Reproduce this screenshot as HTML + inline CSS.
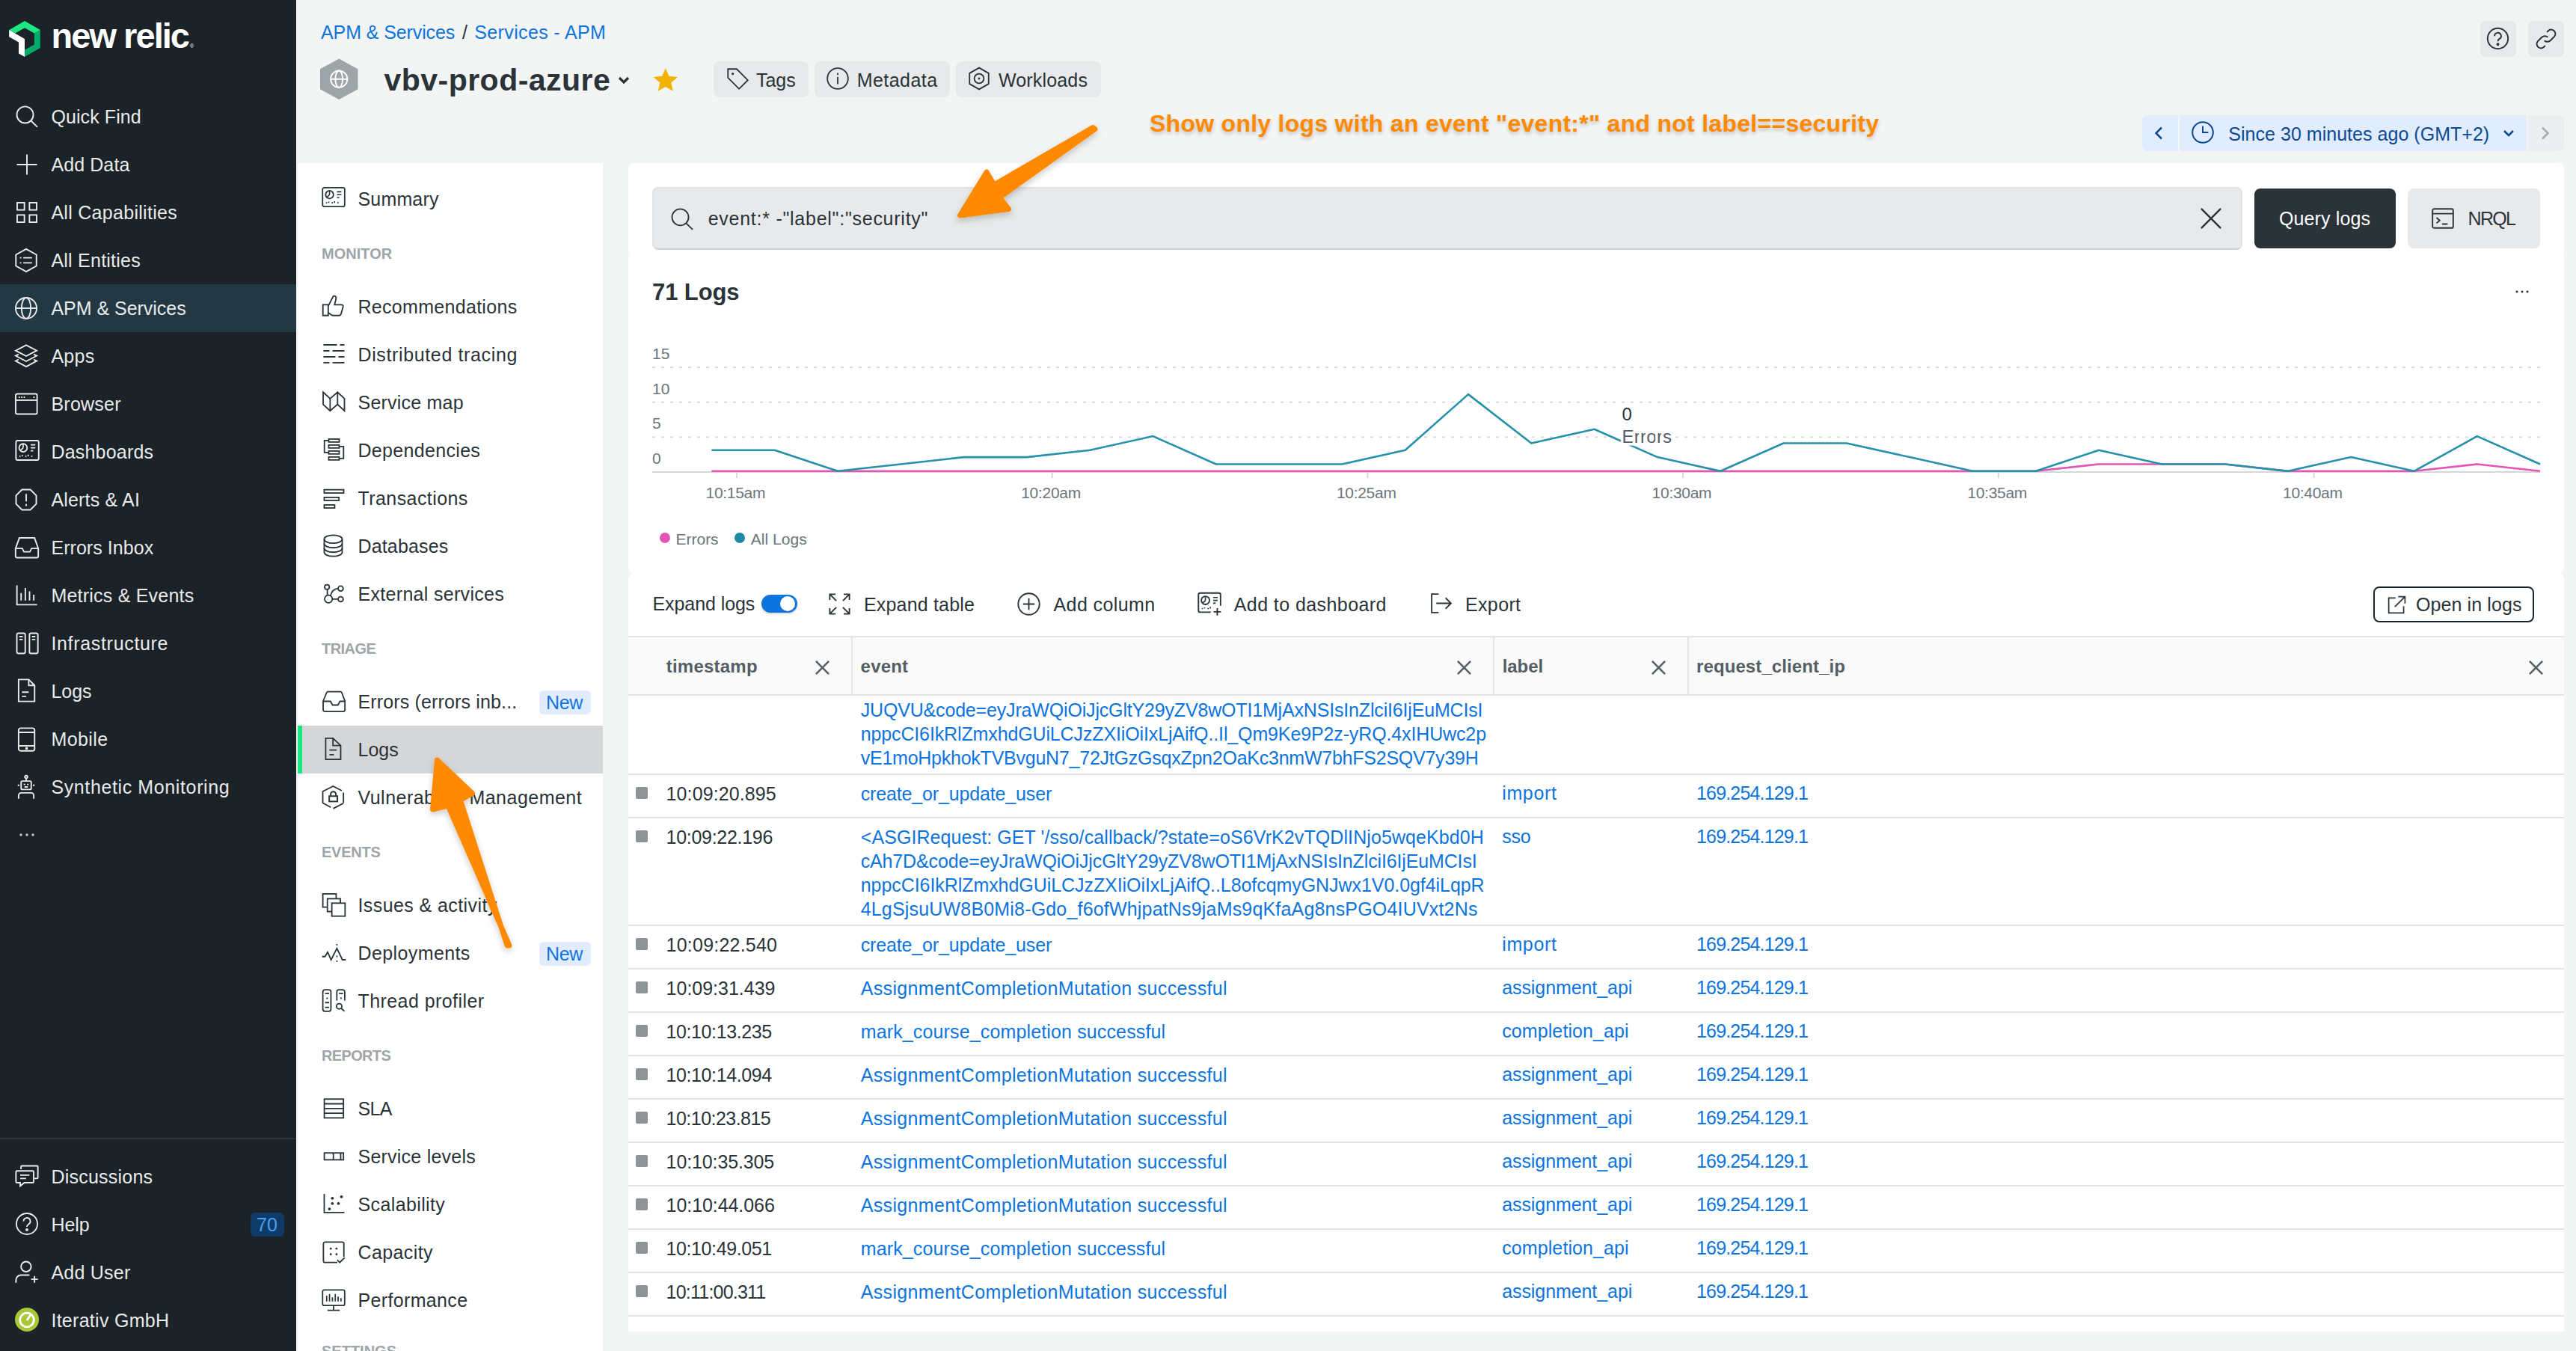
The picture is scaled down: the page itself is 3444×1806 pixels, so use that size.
<!DOCTYPE html>
<html lang="en"><head><meta charset="utf-8"><title>vbv-prod-azure - Logs - New Relic</title>
<style>
*{box-sizing:border-box;margin:0;padding:0}
html,body{width:3444px;height:1806px;overflow:hidden;background:#f3f4f4}
body{font-family:"Liberation Sans",sans-serif;font-size:25px;line-height:32px;color:#293338;position:relative}
.t{position:absolute;white-space:nowrap}
.ic{position:absolute;display:block;overflow:visible}
.abs{position:absolute}
#side{position:absolute;left:0;top:0;width:396px;height:1806px;background:#1b2228;color:#e9ebeb}
#side .act{position:absolute;left:0;top:380px;width:396px;height:64px;background:#223843}
#side .div{position:absolute;left:0;top:1521px;width:396px;height:2px;background:#2a353c}
#sub{position:absolute;left:398px;top:218px;width:408px;height:1588px;background:#fff;color:#293338;overflow:hidden}
#sub .sec{color:#9ea5a9;font-weight:bold}
#sub .cur{position:absolute;left:0;top:752px;width:408px;height:64px;background:#d5d6d7}
#sub .cur i{position:absolute;left:0;top:0;width:6px;height:64px;background:#1ce783}
.badge{position:absolute;height:32px;border-radius:6px;background:#e1edff;color:#0c74df}
.card{position:absolute;left:840px;width:2588px;background:#fff;border-radius:8px}
.btn{position:absolute;border-radius:8px;background:#e8e9ea}
a{color:#0c74df;text-decoration:none}
.lnk{color:#0c74df}
.row{position:absolute;left:840px;width:2588px;border-bottom:2px solid #e3e4e4}
.sq{position:absolute;left:850px;width:16px;height:16px;background:#8e9496;border-radius:2px}
.sh{text-shadow:0 3px 5px rgba(0,0,0,.22)}
</style></head>
<body>
<nav id="side">
<div class="act"></div><div class="div"></div>
<svg class="ic" style="left:12px;top:28px" width="42" height="48" viewBox="0 0 832.8 959.8"><path fill="#00ac69" d="M672.6 332.3l160.2-92.400v480L416.4 959.8V775.2l256.2-147.600z"/><path fill="#1ce783" d="M416.4 184.6L160.2 332.3 0 239.9 416.400 0l416.400 239.900-160.200 92.400z"/><path fill="#fff" d="M256.2 572.3L0 424.6V239.900l416.400 240v479.900l-160.200-92.200z"/></svg>
<span class="t" style="left:68.5px;top:24.3px;font-size:47px;line-height:48px;letter-spacing:-1.96px;font-weight:bold;color:#fff;">new relic</span><span class="t" style="left:254.0px;top:58.0px;font-size:7px;line-height:8px;color:#fff;">®</span><svg class="ic" width="36" height="36" viewBox="0 0 32 32" fill="none" stroke="currentColor" stroke-width="1.7" style="left:17.8px;top:138.0px;"><circle cx="13.800" cy="13.700" r="9.800"/><path d="M20.700 20.700l7.800 7.600"/></svg><span class="t" style="left:68.4px;top:139.5px;letter-spacing:0.10px;">Quick Find</span>
<svg class="ic" width="36" height="36" viewBox="0 0 32 32" fill="none" stroke="currentColor" stroke-width="1.7" style="left:18.0px;top:202.0px;"><path d="M16 4v24M4 16h24"/></svg><span class="t" style="left:68.4px;top:203.5px;letter-spacing:0.10px;">Add Data</span>
<svg class="ic" width="36" height="36" viewBox="0 0 32 32" fill="none" stroke="currentColor" stroke-width="1.7" style="left:18.0px;top:266.0px;"><rect x="4.400" y="4.400" width="8.600" height="8.600"/><rect x="19" y="4.400" width="8.600" height="8.600"/><rect x="4.400" y="19" width="8.600" height="8.600"/><rect x="19" y="19" width="8.600" height="8.600"/></svg><span class="t" style="left:68.4px;top:267.5px;letter-spacing:0.29px;">All Capabilities</span>
<svg class="ic" width="36" height="36" viewBox="0 0 32 32" fill="none" stroke="currentColor" stroke-width="1.7" style="left:17.2px;top:330.0px;"><path d="M16 2.500l12.200 6.800v13.400L16 29.500 3.800 22.700V9.300z"/><path d="M12.500 13h10.500M12.500 19h10.500M8.500 13h1.800M8.500 19h1.800"/></svg><span class="t" style="left:68.4px;top:331.5px;letter-spacing:0.24px;">All Entities</span>
<svg class="ic" width="36" height="36" viewBox="0 0 32 32" fill="none" stroke="currentColor" stroke-width="1.7" style="left:17.2px;top:394.0px;"><circle cx="16" cy="16" r="12.500"/><ellipse cx="16" cy="16" rx="5.500" ry="12.500"/><path d="M3.500 16h25"/></svg><span class="t" style="left:68.4px;top:395.5px;letter-spacing:-0.02px;">APM &amp; Services</span>
<svg class="ic" width="36" height="36" viewBox="0 0 32 32" fill="none" stroke="currentColor" stroke-width="1.7" style="left:17.2px;top:458.0px;"><path d="M16 3l12.500 6.500L16 16 3.500 9.500z"/><path d="M7 13.800l-3.500 1.800L16 22.200l12.500-6.600-3.500-1.800M7 20l-3.500 1.800L16 28.500l12.500-6.700L25 20"/></svg><span class="t" style="left:68.4px;top:459.5px;letter-spacing:0.29px;">Apps</span>
<svg class="ic" width="36" height="36" viewBox="0 0 32 32" fill="none" stroke="currentColor" stroke-width="1.7" style="left:16.9px;top:522.0px;"><rect x="3.500" y="4" width="25.500" height="24" rx="2"/><path d="M3.500 11.500h25.500"/><path d="M7 8h1.500M10 8h1.500M13 8h1.500M24.500 8h1.500" stroke-width="1.600"/></svg><span class="t" style="left:68.4px;top:523.5px;letter-spacing:0.25px;">Browser</span>
<svg class="ic" width="36" height="36" viewBox="0 0 32 32" fill="none" stroke="currentColor" stroke-width="1.7" style="left:17.5px;top:584.0px;"><rect x="3" y="4.500" width="27" height="23" rx="2"/><circle cx="11.500" cy="13" r="4.800"/><path d="M11.500 13v-4.800M11.500 13l-3.400 3.400M20.500 9.500h5.500M20.500 13h5.500M20.500 16.500h3M7 23h1.500M10.500 23v-1.500M14 23h1.500M17.500 23v-2M21 23h1.500" stroke-width="1.500"/></svg><span class="t" style="left:68.4px;top:587.5px;letter-spacing:0.21px;">Dashboards</span>
<svg class="ic" width="36" height="36" viewBox="0 0 32 32" fill="none" stroke="currentColor" stroke-width="1.7" style="left:17.2px;top:650.0px;"><path d="M11 4h10l7 7v10l-7 7H11l-7-7V11z"/><path d="M16 9v9M16 21v2.500"/></svg><span class="t" style="left:68.4px;top:651.5px;letter-spacing:0.18px;">Alerts &amp; AI</span>
<svg class="ic" width="36" height="36" viewBox="0 0 32 32" fill="none" stroke="currentColor" stroke-width="1.7" style="left:18.0px;top:714.0px;"><path d="M2.500 17L7 4.500h18L29.500 17v9a2 2 0 0 1-2 2h-23a2 2 0 0 1-2-2z"/><path d="M2.500 17h8l2 4h7l2-4h8"/></svg><span class="t" style="left:68.4px;top:715.5px;letter-spacing:0.06px;">Errors Inbox</span>
<svg class="ic" width="36" height="36" viewBox="0 0 32 32" fill="none" stroke="currentColor" stroke-width="1.7" style="left:16.9px;top:778.0px;"><path d="M5 4v23h24"/><path d="M10 22v-9M15 22V7M20 22V11M25 22v-7"/></svg><span class="t" style="left:68.4px;top:779.5px;letter-spacing:0.22px;">Metrics &amp; Events</span>
<svg class="ic" width="36" height="36" viewBox="0 0 32 32" fill="none" stroke="currentColor" stroke-width="1.7" style="left:17.5px;top:842.0px;"><rect x="4" y="4" width="10" height="24" rx="2"/><rect x="19" y="4" width="10" height="24" rx="2"/><path d="M7 8h4M7 11.500h4M22 8h4M22 11.500h4" stroke-width="1.600"/></svg><span class="t" style="left:68.4px;top:843.5px;letter-spacing:0.68px;">Infrastructure</span>
<svg class="ic" width="36" height="36" viewBox="0 0 32 32" fill="none" stroke="currentColor" stroke-width="1.7" style="left:16.5px;top:905.0px;"><path d="M7 3h12l7 7v19H7z"/><path d="M19 3v7h7M11 18h8M11 23h5"/></svg><span class="t" style="left:68.4px;top:907.5px;letter-spacing:-0.00px;">Logs</span>
<svg class="ic" width="36" height="36" viewBox="0 0 32 32" fill="none" stroke="currentColor" stroke-width="1.7" style="left:16.5px;top:970.0px;"><rect x="7" y="3" width="19" height="27" rx="2.500"/><path d="M7 8h19M7 24h19"/><circle cx="16.500" cy="27" r="0.800" fill="currentColor"/></svg><span class="t" style="left:68.4px;top:971.5px;letter-spacing:0.43px;">Mobile</span>
<svg class="ic" width="36" height="36" viewBox="0 0 32 32" fill="none" stroke="currentColor" stroke-width="1.7" style="left:17.0px;top:1034.0px;"><circle cx="16" cy="4" r="1.600"/><path d="M16 6v3"/><rect x="10" y="9" width="12" height="10" rx="1.500"/><path d="M13 13h2M17 13h2M14 16h4" stroke-width="1.600"/><path d="M7 30v-4a3 3 0 0 1 3-3h12a3 3 0 0 1 3 3v4M8 14H6M26 14h-2"/></svg><span class="t" style="left:68.4px;top:1035.5px;letter-spacing:0.62px;">Synthetic Monitoring</span>
<svg class="ic" width="32" height="32" viewBox="0 0 32 32" fill="none" stroke="currentColor" stroke-width="2" style="left:20.0px;top:1100.0px;color:#c4c8ca;"><circle cx="8" cy="16" r="1.700" fill="currentColor" stroke="none"/><circle cx="16" cy="16" r="1.700" fill="currentColor" stroke="none"/><circle cx="24" cy="16" r="1.700" fill="currentColor" stroke="none"/></svg><svg class="ic" width="36" height="36" viewBox="0 0 32 32" fill="none" stroke="currentColor" stroke-width="1.7" style="left:18.0px;top:1554.0px;"><path d="M9 8V5a1 1 0 0 1 1-1h18a1 1 0 0 1 1 1v13a1 1 0 0 1-1 1h-3"/><path d="M4 10h19a1 1 0 0 1 1 1v12a1 1 0 0 1-1 1H13l-5 4v-4H4a1 1 0 0 1-1-1V11a1 1 0 0 1 1-1z"/><path d="M8 15h11M8 19h7" stroke-width="1.600"/></svg><span class="t" style="left:68.4px;top:1556.5px;letter-spacing:0.23px;">Discussions</span>
<svg class="ic" width="36" height="36" viewBox="0 0 32 32" fill="none" stroke="currentColor" stroke-width="1.7" style="left:18.0px;top:1618.0px;"><circle cx="16" cy="16" r="12.500"/><path d="M12 13a4 4 0 1 1 6 3.400c-1.300.8-2 1.600-2 3.100"/><circle cx="16" cy="23" r="0.900" fill="currentColor"/></svg><span class="t" style="left:68.4px;top:1620.5px;letter-spacing:-0.06px;">Help</span>
<svg class="ic" width="36" height="36" viewBox="0 0 32 32" fill="none" stroke="currentColor" stroke-width="1.7" style="left:18.0px;top:1682.0px;"><circle cx="15" cy="10" r="6"/><path d="M3 29v-3a6 6 0 0 1 6-6h10"/><path d="M25 21v8M21 25h8"/></svg><span class="t" style="left:68.4px;top:1684.5px;letter-spacing:0.24px;">Add User</span>
<div class="abs" style="left:20px;top:1748px;width:32px;height:32px;border-radius:50%;background:#a9c838"></div><svg class="ic" style="left:20px;top:1748px" width="32" height="32" viewBox="0 0 32 32" fill="none" stroke="#fff" stroke-width="2.800"><circle cx="16" cy="16.500" r="9.300"/><path d="M16 17l5.500-8.500"/></svg><span class="t" style="left:68.4px;top:1748.5px;letter-spacing:0.29px;">Iterativ GmbH</span><div class="abs" style="left:335px;top:1621px;width:45px;height:32px;border-radius:6px;background:#0f3b69"></div><span class="t" style="left:343.0px;top:1621.0px;letter-spacing:0.13px;color:#4a9ff5;">70</span></nav>
<nav id="sub">
<div class="cur"><i></i></div>
<svg class="ic" width="35" height="35" viewBox="0 0 32 32" fill="none" stroke="currentColor" stroke-width="1.65" style="left:29.5px;top:28.4px;"><rect x="3" y="4.500" width="27" height="23" rx="2"/><circle cx="11.500" cy="13" r="4.800"/><path d="M11.500 13v-4.800M11.500 13l-3.400 3.400M20.500 9.500h5.500M20.500 13h5.500M20.500 16.500h3M7 23h1.500M10.500 23v-1.500M14 23h1.500M17.500 23v-2M21 23h1.500" stroke-width="1.500"/></svg><span class="t" style="left:80.5px;top:32.2px;letter-spacing:0.16px;">Summary</span>
<span class="t sec" style="left:32.0px;top:109.0px;font-size:20px;line-height:24px;letter-spacing:0.02px;">MONITOR</span>
<svg class="ic" width="35" height="35" viewBox="0 0 32 32" fill="none" stroke="currentColor" stroke-width="1.65" style="left:29.5px;top:173.0px;"><path d="M3.400 14.900h6.500v13.200H3.400z"/><path d="M9.900 16.500l5.700-11c.4-1.500 1.900-1.600 3-.900 1.400 1 1 2.900.6 4.400l-1.600 5.900H26c1.600 0 2.400 1.300 2 2.700L25.600 26c-.4 1.400-1.200 2.100-2.600 2.100h-7.500c-1.500 0-3-1.600-5.600-3.600"/></svg><span class="t" style="left:80.5px;top:176.2px;letter-spacing:0.30px;">Recommendations</span>
<svg class="ic" width="35" height="35" viewBox="0 0 32 32" fill="none" stroke="currentColor" stroke-width="1.65" style="left:29.5px;top:237.0px;"><path d="M4.100 5.500h16.400M24.300 5.500h5.400M4.100 12.800h7.300M15.100 12.800h14.600M4.100 20.100h14.600M22.400 20.100h7.300M4.100 27.400h7.300M15.100 27.400h14.600"/></svg><span class="t" style="left:80.5px;top:240.2px;letter-spacing:0.63px;">Distributed tracing</span>
<svg class="ic" width="35" height="35" viewBox="0 0 32 32" fill="none" stroke="currentColor" stroke-width="1.65" style="left:29.5px;top:301.0px;"><path d="M3.700 4.800l8.500 7.900 9.100-7.900 8.400 7.900v14.900l-8.400-7.900-9.100 7.900-8.500-7.900z"/><path d="M12.200 12.700v14.900M21.300 4.800v14.900"/></svg><span class="t" style="left:80.5px;top:304.2px;letter-spacing:0.22px;">Service map</span>
<svg class="ic" width="35" height="35" viewBox="0 0 32 32" fill="none" stroke="currentColor" stroke-width="1.65" style="left:29.5px;top:365.0px;"><rect x="10.500" y="3.600" width="12.800" height="3.600"/><rect x="10.500" y="10.900" width="12.800" height="3.600"/><rect x="10.500" y="18.200" width="12.800" height="3.600"/><rect x="10.500" y="25.500" width="12.800" height="3.600"/><path d="M10.500 5.400H5.200V20h5.300M23.300 12.700h5.300v14.600h-5.300"/></svg><span class="t" style="left:80.5px;top:368.2px;letter-spacing:0.32px;">Dependencies</span>
<svg class="ic" width="35" height="35" viewBox="0 0 32 32" fill="none" stroke="currentColor" stroke-width="1.65" style="left:29.5px;top:429.0px;"><rect x="5" y="7" width="23.800" height="4"/><rect x="5" y="16.400" width="18" height="3.700"/><rect x="5" y="25.600" width="12.800" height="3.700"/></svg><span class="t" style="left:80.5px;top:432.2px;letter-spacing:0.42px;">Transactions</span>
<svg class="ic" width="35" height="35" viewBox="0 0 32 32" fill="none" stroke="currentColor" stroke-width="1.65" style="left:29.5px;top:493.5px;"><ellipse cx="16" cy="8" rx="11" ry="5"/><path d="M5 8v16c0 2.800 4.900 5 11 5s11-2.200 11-5V8"/><path d="M5 13.500c0 2.800 4.900 5 11 5s11-2.200 11-5M5 19c0 2.800 4.900 5 11 5s11-2.200 11-5"/></svg><span class="t" style="left:80.5px;top:496.2px;letter-spacing:0.15px;">Databases</span>
<svg class="ic" width="35" height="35" viewBox="0 0 32 32" fill="none" stroke="currentColor" stroke-width="1.65" style="left:29.5px;top:557.0px;"><circle cx="8.400" cy="8.900" r="2.900"/><circle cx="10.200" cy="23.500" r="4.700"/><circle cx="25.100" cy="10.700" r="3.100"/><circle cx="25.100" cy="23.800" r="3.100"/><path d="M8.800 11.800V19M12.700 19.500c1.500-5.500 5.300-8.500 9.300-8.800M14.900 23.700H22"/></svg><span class="t" style="left:80.5px;top:560.2px;letter-spacing:0.31px;">External services</span>
<span class="t sec" style="left:32.0px;top:637.0px;font-size:20px;line-height:24px;letter-spacing:-0.54px;">TRIAGE</span>
<svg class="ic" width="35" height="35" viewBox="0 0 32 32" fill="none" stroke="currentColor" stroke-width="1.65" style="left:29.5px;top:701.0px;"><path d="M3.700 16.700L8 6.200c.3-.700.700-1 1.500-1h15.400c.8 0 1.200.3 1.500 1l3.900 10.500v10.600a2 2 0 0 1-2 2H5.700a2 2 0 0 1-2-2z"/><path d="M3.700 16.900h8.900l2.700 4.600h6.300l2.700-4.600h6"/></svg><span class="t" style="left:80.5px;top:704.2px;letter-spacing:0.15px;">Errors (errors inb...</span>
<svg class="ic" width="35" height="35" viewBox="0 0 32 32" fill="none" stroke="currentColor" stroke-width="1.65" style="left:29.5px;top:765.0px;"><path d="M6.800 3.600h8.900l9.400 8.900v16.800H6.800z"/><path d="M15.700 3.600v8.900h9.400M11.400 18h8.800M11.400 23.700h5.500"/></svg><span class="t" style="left:80.5px;top:768.2px;letter-spacing:-0.00px;">Logs</span>
<svg class="ic" width="35" height="35" viewBox="0 0 32 32" fill="none" stroke="currentColor" stroke-width="1.65" style="left:29.5px;top:829.0px;"><path d="M28.500 11.500V24M26.500 9.200L15.900 3.700 3.200 10v14l9.800 5.500M16 31l12.500-6.500"/><rect x="11.100" y="15.800" width="10" height="6.500" stroke-width="1.800"/><path d="M12.900 15.800v-2.300a3.200 3.200 0 0 1 6.400 0v2.300" stroke-width="1.800"/></svg><span class="t" style="left:80.5px;top:832.2px;letter-spacing:0.48px;">Vulnerability Management</span>
<span class="t sec" style="left:32.0px;top:909.0px;font-size:20px;line-height:24px;letter-spacing:-0.26px;">EVENTS</span>
<svg class="ic" width="35" height="35" viewBox="0 0 32 32" fill="none" stroke="currentColor" stroke-width="1.65" style="left:29.5px;top:973.0px;"><rect x="3.300" y="3.600" width="16.300" height="16.200" fill="#fff"/><rect x="8.900" y="9.500" width="15.800" height="15.700" fill="#fff"/><rect x="14.300" y="14.900" width="16.200" height="15.900" fill="#fff"/></svg><span class="t" style="left:80.5px;top:976.2px;letter-spacing:0.41px;">Issues &amp; activity</span>
<svg class="ic" width="35" height="35" viewBox="0 0 32 32" fill="none" stroke="currentColor" stroke-width="1.65" style="left:29.5px;top:1037.0px;"><path d="M2.400 21.700H6l3.200-5.500 4.200 9.600 7.100-14.100 6.700 13.900h4.200"/><path d="M20.500 6.300v1.800M20.500 20.600v1.800M20.500 26.400v1.800"/></svg><span class="t" style="left:80.5px;top:1040.2px;letter-spacing:0.39px;">Deployments</span>
<svg class="ic" width="35" height="35" viewBox="0 0 32 32" fill="none" stroke="currentColor" stroke-width="1.65" style="left:29.5px;top:1101.0px;"><rect x="3.300" y="3.800" width="9.900" height="26.200" rx="2.500"/><path d="M6 8.400h5.100M7.700 14.200h1.700M6 19.400h5.100M6 25.200h5.100" stroke-width="1.700"/><path d="M20.400 16.800V6.300a2.500 2.500 0 0 1 2.500-2.500h4.700a2.500 2.500 0 0 1 2.500 2.500v10.500"/><path d="M23 8.400h5M24.700 14.200h1.700" stroke-width="1.700"/><circle cx="23.300" cy="23.900" r="3.300"/><path d="M25.700 26.300l4 3.700"/></svg><span class="t" style="left:80.5px;top:1104.2px;letter-spacing:0.43px;">Thread profiler</span>
<span class="t sec" style="left:32.0px;top:1181.0px;font-size:20px;line-height:24px;letter-spacing:-0.66px;">REPORTS</span>
<svg class="ic" width="35" height="35" viewBox="0 0 32 32" fill="none" stroke="currentColor" stroke-width="1.65" style="left:29.5px;top:1245.0px;"><rect x="5.100" y="5.700" width="23.400" height="23"/><path d="M5.100 11.450h23.400M5.100 17.200h23.400M5.100 22.950h23.400"/></svg><span class="t" style="left:80.5px;top:1248.2px;letter-spacing:-0.70px;">SLA</span>
<svg class="ic" width="35" height="35" viewBox="0 0 32 32" fill="none" stroke="currentColor" stroke-width="1.65" style="left:29.5px;top:1309.0px;"><rect x="5.100" y="13" width="23.400" height="8.400"/><path d="M16.200 13v8.400M25.100 13v8.400"/></svg><span class="t" style="left:80.5px;top:1312.2px;letter-spacing:0.23px;">Service levels</span>
<svg class="ic" width="35" height="35" viewBox="0 0 32 32" fill="none" stroke="currentColor" stroke-width="1.65" style="left:29.5px;top:1373.0px;"><path d="M5 4.600v22.800h24.700"/><g fill="currentColor" stroke="none"><circle cx="15" cy="9.900" r="1.750"/><circle cx="26.100" cy="8.100" r="1.750"/><circle cx="15" cy="16.300" r="1.750"/><circle cx="22.400" cy="16.300" r="1.750"/><circle cx="11.400" cy="22.900" r="1.750"/></g></svg><span class="t" style="left:80.5px;top:1376.2px;letter-spacing:0.38px;">Scalability</span>
<svg class="ic" width="35" height="35" viewBox="0 0 32 32" fill="none" stroke="currentColor" stroke-width="1.65" style="left:29.5px;top:1438.0px;"><path d="M21 29H6a2 2 0 0 1-2-2V6a2 2 0 0 1 2-2h21a2 2 0 0 1 2 2v16"/><path d="M21 26l3 3 6-6"/><g fill="currentColor" stroke="none"><circle cx="13" cy="12" r="1.300"/><circle cx="20" cy="12" r="1.300"/><circle cx="13" cy="19" r="1.300"/><circle cx="20" cy="19" r="1.300"/></g></svg><span class="t" style="left:80.5px;top:1440.2px;letter-spacing:0.40px;">Capacity</span>
<svg class="ic" width="35" height="35" viewBox="0 0 32 32" fill="none" stroke="currentColor" stroke-width="1.65" style="left:29.5px;top:1502.0px;"><rect x="3" y="4" width="27" height="19" rx="2"/><path d="M16.500 23v6M9 29h15"/><path d="M8 18v-7M11.500 18v-9M15 18v-5M18.500 18v-9M22 18v-6M25.500 18v-4" stroke-width="1.600"/></svg><span class="t" style="left:80.5px;top:1504.2px;letter-spacing:0.35px;">Performance</span>
<span class="t sec" style="left:32.0px;top:1576.0px;font-size:20px;line-height:24px;letter-spacing:-0.00px;">SETTINGS</span>
<div class="badge" style="left:323px;top:704.5px;width:69px"></div><span class="t" style="left:332.0px;top:705.2px;letter-spacing:-0.41px;color:#0c74df;">New</span><div class="badge" style="left:323px;top:1040.5px;width:69px"></div><span class="t" style="left:332.0px;top:1041.2px;letter-spacing:-0.41px;color:#0c74df;">New</span></nav>
<header>
<span class="t" style="left:429.0px;top:27.0px;letter-spacing:-0.10px;color:#0c74df;">APM &amp; Services</span><span class="t" style="left:618.0px;top:27.0px;">/</span><span class="t" style="left:634.3px;top:27.0px;letter-spacing:0.36px;color:#0c74df;">Services - APM</span>
<svg class="ic" style="left:428px;top:78.300px" width="50.500" height="55.500" viewBox="0 0 52 56"><path d="M26 0l26 14v28L26 56 0 42V14z" fill="#9ea5a9"/><g fill="none" stroke="#fff" stroke-width="2"><circle cx="26" cy="28" r="11.500"/><ellipse cx="26" cy="28" rx="5" ry="11.500"/><path d="M14.500 28h23"/></g></svg><span class="t" style="left:513.5px;top:79.3px;font-size:41px;line-height:56px;letter-spacing:0.47px;font-weight:bold;color:#293338;">vbv-prod-azure</span><svg class="ic" style="left:826px;top:102px" width="16" height="12" viewBox="0 0 16 12" fill="none" stroke="#293338" stroke-width="3.200"><path d="M2 2l6 6 6-6"/></svg><svg class="ic" style="left:874px;top:90.500px" width="31.600" height="31" viewBox="0 0 36 35"><path d="M18 0l5.300 12.200 13.200 1.200-10 8.700 3 12.900L18 28.200 6.500 35l3-12.900-10-8.700 13.200-1.200z" fill="#f0b400"/></svg>
<div class="btn" style="left:954px;top:82px;width:127px;height:48px"></div><svg class="ic" width="34" height="34" viewBox="0 0 32 32" fill="none" stroke="currentColor" stroke-width="1.7" style="left:968.7px;top:88.2px;"><path d="M4 4h11l14 14-11 11L4 15z"/><circle cx="10" cy="10" r="1.500" fill="currentColor" stroke="none"/></svg><span class="t" style="left:1011.0px;top:90.7px;letter-spacing:-0.03px;">Tags</span>
<div class="btn" style="left:1089px;top:82px;width:181px;height:48px"></div><svg class="ic" width="34" height="34" viewBox="0 0 32 32" fill="none" stroke="currentColor" stroke-width="1.7" style="left:1102.7px;top:88.2px;"><circle cx="16" cy="16" r="13"/><path d="M16 14v9M16 9v2.500"/></svg><span class="t" style="left:1145.7px;top:90.7px;letter-spacing:0.45px;">Metadata</span>
<div class="btn" style="left:1278px;top:82px;width:194px;height:48px"></div><svg class="ic" width="34" height="34" viewBox="0 0 32 32" fill="none" stroke="currentColor" stroke-width="1.7" style="left:1291.7px;top:88.2px;"><path d="M16 2.500l12 6.800v13.400L16 29.500 4 22.700V9.300z"/><circle cx="16" cy="16" r="6"/><circle cx="16" cy="16" r="1.300" fill="currentColor" stroke="none"/></svg><span class="t" style="left:1335.0px;top:90.7px;letter-spacing:0.16px;">Workloads</span>
<div class="btn" style="left:3316px;top:28px;width:48px;height:48px"></div><svg class="ic" width="35" height="35" viewBox="0 0 32 32" fill="none" stroke="currentColor" stroke-width="1.8" style="left:3322.0px;top:34.0px;"><circle cx="16" cy="16" r="12.500"/><path d="M12 13a4 4 0 1 1 6 3.400c-1.300.8-2 1.600-2 3.100"/><circle cx="16" cy="23" r="0.900" fill="currentColor"/></svg><div class="btn" style="left:3380px;top:28px;width:48px;height:48px"></div><svg class="ic" width="36" height="36" viewBox="0 0 32 32" fill="none" stroke="currentColor" stroke-width="1.8" style="left:3385.5px;top:33.5px;"><path d="M14 18a5 5 0 0 0 7 0l5-5a5 5 0 0 0-7-7l-2 2"/><path d="M18 14a5 5 0 0 0-7 0l-5 5a5 5 0 0 0 7 7l2-2"/></svg>
<div class="abs" style="left:2864px;top:154px;width:48px;height:48px;background:#e1edff;border-radius:8px 0 0 8px"></div><div class="abs" style="left:2914px;top:154px;width:464px;height:48px;background:#e1edff"></div><div class="abs" style="left:3380px;top:154px;width:48px;height:48px;background:#ecedee;border-radius:0 8px 8px 0"></div><svg class="ic" style="left:2880px;top:169px" width="12" height="18" viewBox="0 0 12 18" fill="none" stroke="#0a4a94" stroke-width="2.500"><path d="M10 1.500L2.500 9l7.500 7.500"/></svg><svg class="ic" style="left:3397px;top:169px" width="12" height="18" viewBox="0 0 12 18" fill="none" stroke="#a5abae" stroke-width="2.500"><path d="M2 1.500L9.500 9 2 16.500"/></svg><svg class="ic" width="34" height="34" viewBox="0 0 32 32" fill="none" stroke="currentColor" stroke-width="1.9" style="left:2928.0px;top:160.0px;color:#0a4a94;"><circle cx="16" cy="16" r="13"/><path d="M16 8v8h7"/></svg><span class="t" style="left:2979.3px;top:162.5px;letter-spacing:0.03px;color:#0a4a94;">Since 30 minutes ago (GMT+2)</span><svg class="ic" style="left:3346px;top:173px" width="16" height="11" viewBox="0 0 16 11" fill="none" stroke="#0a4a94" stroke-width="2.600"><path d="M2 2l6 6 6-6"/></svg>
</header>
<main>
<div class="card" style="top:218px;height:125px"></div><div class="card" style="top:335px;height:431px"></div><div class="card" style="top:766px;height:1014px;border-radius:8px 8px 0 0"></div>
<div class="abs" style="left:872px;top:250px;width:2126px;height:84px;background:#e7e9ea;border-radius:8px;border:2px solid #dfe1e2;border-bottom-color:#cfd2d3"></div><svg class="ic" width="36" height="36" viewBox="0 0 32 32" fill="none" stroke="currentColor" stroke-width="1.6" style="left:893.5px;top:274.5px;"><circle cx="13.800" cy="13.700" r="9.800"/><path d="M20.700 20.700l7.800 7.600"/></svg><span class="t" style="left:946.7px;top:276.0px;letter-spacing:0.74px;">event:* -"label":"security"</span><svg class="ic" width="38" height="38" viewBox="0 0 32 32" fill="none" stroke="currentColor" stroke-width="2" style="left:2937.0px;top:273.0px;"><path d="M5 5l22 22M27 5L5 27"/></svg><div class="abs" style="left:3014px;top:252px;width:189px;height:80px;background:#293338;border-radius:8px"></div><span class="t" style="left:3047.0px;top:276.0px;letter-spacing:0.12px;color:#fff;">Query logs</span><div class="btn" style="left:3219px;top:252px;width:177px;height:80px"></div><svg class="ic" width="34" height="34" viewBox="0 0 32 32" fill="none" stroke="currentColor" stroke-width="1.8" style="left:3249.0px;top:275.0px;"><rect x="3" y="4" width="26" height="24" rx="2"/><path d="M3 10h26M8 15l4 3.500-4 3.500M15 23h7"/></svg><span class="t" style="left:3299.6px;top:276.0px;letter-spacing:-1.70px;">NRQL</span>
<span class="t" style="left:872.0px;top:371.0px;font-size:31px;line-height:40px;letter-spacing:-0.10px;font-weight:bold;color:#293338;">71 Logs</span><svg class="ic" width="28" height="28" viewBox="0 0 32 32" fill="none" stroke="currentColor" stroke-width="2" style="left:3358.0px;top:376.0px;"><circle cx="8" cy="16" r="1.700" fill="currentColor" stroke="none"/><circle cx="16" cy="16" r="1.700" fill="currentColor" stroke="none"/><circle cx="24" cy="16" r="1.700" fill="currentColor" stroke="none"/></svg>
<svg class="ic" style="left:840px;top:440px" width="2588" height="300" viewBox="0 0 2588 300" font-family="Liberation Sans, sans-serif"><path d="M32 51.0H2556" stroke="#d9dcdd" stroke-width="2" stroke-dasharray="4 8"/><path d="M32 97.7H2556" stroke="#d9dcdd" stroke-width="2" stroke-dasharray="4 8"/><path d="M32 144.3H2556" stroke="#d9dcdd" stroke-width="2" stroke-dasharray="4 8"/><path d="M32 191.0H2556" stroke="#d5d8d9" stroke-width="2"/><path d="M145.0 191.0v8" stroke="#d5d8d9" stroke-width="2"/><path d="M566.7 191.0v8" stroke="#d5d8d9" stroke-width="2"/><path d="M988.4 191.0v8" stroke="#d5d8d9" stroke-width="2"/><path d="M1410.1 191.0v8" stroke="#d5d8d9" stroke-width="2"/><path d="M1831.8 191.0v8" stroke="#d5d8d9" stroke-width="2"/><path d="M2253.5 191.0v8" stroke="#d5d8d9" stroke-width="2"/><polyline points="111.4,189.8 195.7,189.8 280.0,189.8 364.3,189.8 448.6,189.8 532.9,189.8 617.2,189.8 701.5,189.8 785.8,189.8 870.1,189.8 954.4,189.8 1038.7,189.8 1123.0,189.8 1207.3,189.8 1291.6,189.8 1375.9,189.8 1460.2,189.8 1544.5,189.8 1628.8,189.8 1713.1,189.8 1797.4,189.8 1881.7,189.8 1966.0,180.5 2050.3,180.5 2134.6,180.5 2218.9,189.8 2303.2,189.8 2387.5,189.8 2471.8,180.5 2556.1,189.8" fill="none" stroke="#e354b5" stroke-width="2.600" stroke-linejoin="round"/><polyline points="111.4,161.8 195.7,161.8 280.0,189.8 364.3,180.5 448.6,171.1 532.9,171.1 617.2,161.8 701.5,143.1 785.8,180.5 870.1,180.5 954.4,180.5 1038.7,161.8 1123.0,87.1 1207.3,152.5 1291.6,133.8 1375.9,171.1 1460.2,189.8 1544.5,152.5 1628.8,152.5 1713.1,171.1 1797.4,189.8 1881.7,189.8 1966.0,161.8 2050.3,180.5 2134.6,180.5 2218.9,189.8 2303.2,171.1 2387.5,189.8 2471.8,143.1 2556.1,180.5" fill="none" stroke="#2691ab" stroke-width="2.600" stroke-linejoin="round"/><text x="32" y="39.5" font-size="21" fill="#6b757b">15</text><text x="32" y="87.0" font-size="21" fill="#6b757b">10</text><text x="32" y="133.0" font-size="21" fill="#6b757b">5</text><text x="32" y="179.7" font-size="21" fill="#6b757b">0</text><text x="143.5" y="226" font-size="21" fill="#6b757b" text-anchor="middle" textLength="80">10:15am</text><text x="565.2" y="226" font-size="21" fill="#6b757b" text-anchor="middle" textLength="80">10:20am</text><text x="986.9" y="226" font-size="21" fill="#6b757b" text-anchor="middle" textLength="80">10:25am</text><text x="1408.6" y="226" font-size="21" fill="#6b757b" text-anchor="middle" textLength="80">10:30am</text><text x="1830.3" y="226" font-size="21" fill="#6b757b" text-anchor="middle" textLength="80">10:35am</text><text x="2252.0" y="226" font-size="21" fill="#6b757b" text-anchor="middle" textLength="80">10:40am</text><text x="1328.6" y="122" font-size="24" fill="#293338" stroke="#fff" stroke-width="7" paint-order="stroke" stroke-linejoin="round">0</text><text x="1328.6" y="152" font-size="24" fill="#535e65" textLength="66.5" stroke="#fff" stroke-width="7" paint-order="stroke" stroke-linejoin="round">Errors</text></svg>
<div class="abs" style="left:882px;top:712px;width:14px;height:14px;border-radius:50%;background:#e354b5"></div><span class="t" style="left:903.6px;top:705.0px;font-size:21px;letter-spacing:-0.03px;color:#6b757b;">Errors</span><div class="abs" style="left:982px;top:712px;width:14px;height:14px;border-radius:50%;background:#1f8aa5"></div><span class="t" style="left:1003.7px;top:705.0px;font-size:21px;letter-spacing:0.04px;color:#6b757b;">All Logs</span>
<span class="t" style="left:872.5px;top:791.0px;letter-spacing:-0.08px;">Expand logs</span><div class="abs" style="left:1018px;top:795px;width:48px;height:24px;border-radius:12px;background:#0c74df;box-shadow:0 2px 3px rgba(0,0,0,.15)"></div><div class="abs" style="left:1043px;top:797px;width:20px;height:20px;border-radius:50%;background:#fff"></div><svg class="ic" width="35" height="35" viewBox="0 0 32 32" fill="none" stroke="currentColor" stroke-width="1.7" style="left:1104.5px;top:790.0px;"><path d="M4 11V4h7M4 4l8 8M21 4h7v7M28 4l-8 8M4 21v7h7M4 28l8-8M28 21v7h-7M28 28l-8-8"/></svg><span class="t" style="left:1155.0px;top:792.0px;letter-spacing:0.18px;">Expand table</span><svg class="ic" width="35" height="35" viewBox="0 0 32 32" fill="none" stroke="currentColor" stroke-width="1.7" style="left:1357.5px;top:790.0px;"><circle cx="16" cy="16" r="13"/><path d="M16 9v14M9 16h14"/></svg><span class="t" style="left:1408.5px;top:792.0px;letter-spacing:0.40px;">Add column</span><svg class="ic" width="35" height="35" viewBox="0 0 32 32" fill="none" stroke="currentColor" stroke-width="1.7" style="left:1599.0px;top:789.5px;"><path d="M18 26H5a2 2 0 0 1-2-2V4.500a2 2 0 0 1 2-2h23a2 2 0 0 1 2 2V18"/><circle cx="11.500" cy="11.500" r="5"/><path d="M11.500 11.500v-5M11.500 11.500l-3.500 3.500M21 8h5.500M21 11.500h5.500M21 15h3M7 21.500h1.500M10.500 21.500v-1.500M14 21.500h1.500M17.500 21.500v-2" stroke-width="1.500"/><path d="M26 21v9M21.500 25.500h9"/></svg><span class="t" style="left:1649.7px;top:792.0px;letter-spacing:0.43px;">Add to dashboard</span><svg class="ic" width="33" height="33" viewBox="0 0 32 32" fill="none" stroke="currentColor" stroke-width="1.8" style="left:1909.5px;top:790.2px;"><path d="M13 4H4v24h9"/><path d="M10 16h19M22 9l7 7-7 7"/></svg><span class="t" style="left:1959.0px;top:792.0px;letter-spacing:0.35px;">Export</span><div class="abs" style="left:3173px;top:784px;width:215px;height:48px;border:2px solid #1d252c;border-radius:8px"></div><svg class="ic" width="29" height="29" viewBox="0 0 32 32" fill="none" stroke="currentColor" stroke-width="1.9" style="left:3190.0px;top:793.5px;"><path d="M14 6H4v22h22V18"/><path d="M13 19L28 4M18 4h10v10"/></svg><span class="t" style="left:3230.0px;top:792.0px;letter-spacing:0.10px;">Open in logs</span>
<div class="abs" style="left:840px;top:850px;width:2588px;height:80px;background:#fafafa;border-top:2px solid #e3e4e4;border-bottom:2px solid #e3e4e4"></div><div class="abs" style="left:1138px;top:852px;width:2px;height:76px;background:#e3e4e4"></div><div class="abs" style="left:1996px;top:852px;width:2px;height:76px;background:#e3e4e4"></div><div class="abs" style="left:2256px;top:852px;width:2px;height:76px;background:#e3e4e4"></div><span class="t" style="left:890.7px;top:874.5px;font-size:24px;letter-spacing:0.23px;font-weight:bold;color:#535e65;">timestamp</span><span class="t" style="left:1150.6px;top:874.5px;font-size:24px;letter-spacing:0.20px;font-weight:bold;color:#535e65;">event</span><span class="t" style="left:2008.7px;top:874.5px;font-size:24px;letter-spacing:-0.04px;font-weight:bold;color:#535e65;">label</span><span class="t" style="left:2268.0px;top:874.5px;font-size:24px;letter-spacing:0.10px;font-weight:bold;color:#535e65;">request_client_ip</span><svg class="ic" width="25" height="25" viewBox="0 0 32 32" fill="none" stroke="currentColor" stroke-width="3.2" style="left:1086.5px;top:879.5px;color:#535e65;"><path d="M5 5l22 22M27 5L5 27"/></svg><svg class="ic" width="25" height="25" viewBox="0 0 32 32" fill="none" stroke="currentColor" stroke-width="3.2" style="left:1944.5px;top:879.5px;color:#535e65;"><path d="M5 5l22 22M27 5L5 27"/></svg><svg class="ic" width="25" height="25" viewBox="0 0 32 32" fill="none" stroke="currentColor" stroke-width="3.2" style="left:2204.5px;top:879.5px;color:#535e65;"><path d="M5 5l22 22M27 5L5 27"/></svg><svg class="ic" width="25" height="25" viewBox="0 0 32 32" fill="none" stroke="currentColor" stroke-width="3.2" style="left:3377.5px;top:879.5px;color:#535e65;"><path d="M5 5l22 22M27 5L5 27"/></svg>
<span class="t" style="left:1150.7px;top:932.5px;letter-spacing:-0.17px;color:#0c74df;">JUQVU&amp;code=eyJraWQiOiJjcGltY29yZV8wOTI1MjAxNSIsInZlciI6IjEuMCIsI</span><span class="t" style="left:1150.7px;top:964.5px;letter-spacing:-0.13px;color:#0c74df;">nppcCI6IkRlZmxhdGUiLCJzZXIiOiIxLjAifQ..Il_Qm9Ke9P2z-yRQ.4xIHUwc2p</span><span class="t" style="left:1150.7px;top:996.5px;letter-spacing:-0.24px;color:#0c74df;">vE1moHpkhokTVBvguN7_72JtGzGsqxZpn2OaKc3nmW7bhFS2SQV7y39H</span><div class="row" style="top:1034px;height:2px"></div>
<div class="row" style="top:1092px;height:2px"></div><div class="sq" style="top:1052px"></div><span class="t" style="left:890.6px;top:1044.5px;letter-spacing:0.11px;">10:09:20.895</span><span class="t" style="left:1150.7px;top:1044.5px;letter-spacing:-0.15px;color:#0c74df;">create_or_update_user</span><span class="t" style="left:2008.2px;top:1044.2px;letter-spacing:0.64px;color:#0c74df;">import</span><span class="t" style="left:2268.0px;top:1044.2px;letter-spacing:-0.83px;color:#0c74df;">169.254.129.1</span>
<div class="row" style="top:1236px;height:2px"></div><div class="sq" style="top:1110px"></div><span class="t" style="left:890.6px;top:1102.5px;letter-spacing:-0.29px;">10:09:22.196</span><span class="t" style="left:1150.7px;top:1102.5px;letter-spacing:0.09px;color:#0c74df;">&lt;ASGIRequest: GET '/sso/callback/?state=oS6VrK2vTQDlINjo5wqeKbd0H</span><span class="t" style="left:1150.7px;top:1134.5px;letter-spacing:-0.14px;color:#0c74df;">cAh7D&amp;code=eyJraWQiOiJjcGltY29yZV8wOTI1MjAxNSIsInZlciI6IjEuMCIsI</span><span class="t" style="left:1150.7px;top:1166.5px;letter-spacing:-0.06px;color:#0c74df;">nppcCI6IkRlZmxhdGUiLCJzZXIiOiIxLjAifQ..L8ofcqmyGNJwx1V0.0gf4iLqpR</span><span class="t" style="left:1150.7px;top:1198.5px;letter-spacing:0.18px;color:#0c74df;">4LgSjsuUW8B0Mi8-Gdo_f6ofWhjpatNs9jaMs9qKfaAg8nsPGO4IUVxt2Ns</span><span class="t" style="left:2008.2px;top:1102.2px;letter-spacing:-0.16px;color:#0c74df;">sso</span><span class="t" style="left:2268.0px;top:1102.2px;letter-spacing:-0.83px;color:#0c74df;">169.254.129.1</span>
<div class="row" style="top:1294px;height:2px"></div><div class="sq" style="top:1254px"></div><span class="t" style="left:890.6px;top:1246.5px;letter-spacing:0.22px;">10:09:22.540</span><span class="t" style="left:1150.7px;top:1246.5px;letter-spacing:-0.15px;color:#0c74df;">create_or_update_user</span><span class="t" style="left:2008.2px;top:1246.2px;letter-spacing:0.64px;color:#0c74df;">import</span><span class="t" style="left:2268.0px;top:1246.2px;letter-spacing:-0.83px;color:#0c74df;">169.254.129.1</span>
<div class="row" style="top:1352px;height:2px"></div><div class="sq" style="top:1312px"></div><span class="t" style="left:890.6px;top:1304.5px;letter-spacing:-0.01px;">10:09:31.439</span><span class="t" style="left:1150.7px;top:1304.5px;letter-spacing:0.35px;color:#0c74df;">AssignmentCompletionMutation successful</span><span class="t" style="left:2008.2px;top:1304.2px;letter-spacing:-0.08px;color:#0c74df;">assignment_api</span><span class="t" style="left:2268.0px;top:1304.2px;letter-spacing:-0.83px;color:#0c74df;">169.254.129.1</span>
<div class="row" style="top:1410px;height:2px"></div><div class="sq" style="top:1370px"></div><span class="t" style="left:890.6px;top:1362.5px;letter-spacing:-0.41px;">10:10:13.235</span><span class="t" style="left:1150.7px;top:1362.5px;letter-spacing:0.14px;color:#0c74df;">mark_course_completion successful</span><span class="t" style="left:2008.2px;top:1362.2px;letter-spacing:0.10px;color:#0c74df;">completion_api</span><span class="t" style="left:2268.0px;top:1362.2px;letter-spacing:-0.83px;color:#0c74df;">169.254.129.1</span>
<div class="row" style="top:1468px;height:2px"></div><div class="sq" style="top:1428px"></div><span class="t" style="left:890.6px;top:1420.5px;letter-spacing:-0.41px;">10:10:14.094</span><span class="t" style="left:1150.7px;top:1420.5px;letter-spacing:0.35px;color:#0c74df;">AssignmentCompletionMutation successful</span><span class="t" style="left:2008.2px;top:1420.2px;letter-spacing:-0.08px;color:#0c74df;">assignment_api</span><span class="t" style="left:2268.0px;top:1420.2px;letter-spacing:-0.83px;color:#0c74df;">169.254.129.1</span>
<div class="row" style="top:1526px;height:2px"></div><div class="sq" style="top:1486px"></div><span class="t" style="left:890.6px;top:1478.5px;letter-spacing:-0.53px;">10:10:23.815</span><span class="t" style="left:1150.7px;top:1478.5px;letter-spacing:0.35px;color:#0c74df;">AssignmentCompletionMutation successful</span><span class="t" style="left:2008.2px;top:1478.2px;letter-spacing:-0.08px;color:#0c74df;">assignment_api</span><span class="t" style="left:2268.0px;top:1478.2px;letter-spacing:-0.83px;color:#0c74df;">169.254.129.1</span>
<div class="row" style="top:1584px;height:2px"></div><div class="sq" style="top:1544px"></div><span class="t" style="left:890.6px;top:1536.5px;letter-spacing:-0.12px;">10:10:35.305</span><span class="t" style="left:1150.7px;top:1536.5px;letter-spacing:0.35px;color:#0c74df;">AssignmentCompletionMutation successful</span><span class="t" style="left:2008.2px;top:1536.2px;letter-spacing:-0.08px;color:#0c74df;">assignment_api</span><span class="t" style="left:2268.0px;top:1536.2px;letter-spacing:-0.83px;color:#0c74df;">169.254.129.1</span>
<div class="row" style="top:1642px;height:2px"></div><div class="sq" style="top:1602px"></div><span class="t" style="left:890.6px;top:1594.5px;letter-spacing:-0.07px;">10:10:44.066</span><span class="t" style="left:1150.7px;top:1594.5px;letter-spacing:0.35px;color:#0c74df;">AssignmentCompletionMutation successful</span><span class="t" style="left:2008.2px;top:1594.2px;letter-spacing:-0.08px;color:#0c74df;">assignment_api</span><span class="t" style="left:2268.0px;top:1594.2px;letter-spacing:-0.83px;color:#0c74df;">169.254.129.1</span>
<div class="row" style="top:1700px;height:2px"></div><div class="sq" style="top:1660px"></div><span class="t" style="left:890.6px;top:1652.5px;letter-spacing:-0.41px;">10:10:49.051</span><span class="t" style="left:1150.7px;top:1652.5px;letter-spacing:0.14px;color:#0c74df;">mark_course_completion successful</span><span class="t" style="left:2008.2px;top:1652.2px;letter-spacing:0.10px;color:#0c74df;">completion_api</span><span class="t" style="left:2268.0px;top:1652.2px;letter-spacing:-0.83px;color:#0c74df;">169.254.129.1</span>
<div class="row" style="top:1758px;height:2px"></div><div class="sq" style="top:1718px"></div><span class="t" style="left:890.6px;top:1710.5px;letter-spacing:-0.78px;">10:11:00.311</span><span class="t" style="left:1150.7px;top:1710.5px;letter-spacing:0.35px;color:#0c74df;">AssignmentCompletionMutation successful</span><span class="t" style="left:2008.2px;top:1710.2px;letter-spacing:-0.08px;color:#0c74df;">assignment_api</span><span class="t" style="left:2268.0px;top:1710.2px;letter-spacing:-0.83px;color:#0c74df;">169.254.129.1</span>
</main>
<svg class="ic" style="left:0;top:0;pointer-events:none" width="3444" height="1806" viewBox="0 0 3444 1806"><defs><filter id="sh" x="-20%" y="-20%" width="140%" height="140%"><feDropShadow dx="0" dy="4" stdDeviation="4.500" flood-color="#000" flood-opacity=".2"/></filter></defs><g fill="#ff8a00" stroke="#ff8a00" stroke-width="7" stroke-linejoin="round" filter="url(#sh)"><path d="M1461 170.500L1329 247l-10-17-35.500 58 65-8.500-12-15.500 127.500-91.500z"/><path d="M584.500 1016l47 44.500-16 9 62.500 194.500h3L599 1077l-20.500 5z"/></g></svg>
<span class="t sh" style="left:1537.0px;top:144.5px;font-size:32px;line-height:40px;letter-spacing:0.27px;font-weight:bold;color:#ff8a00;">Show only logs with an event "event:*" and not label==security</span>
</body></html>
